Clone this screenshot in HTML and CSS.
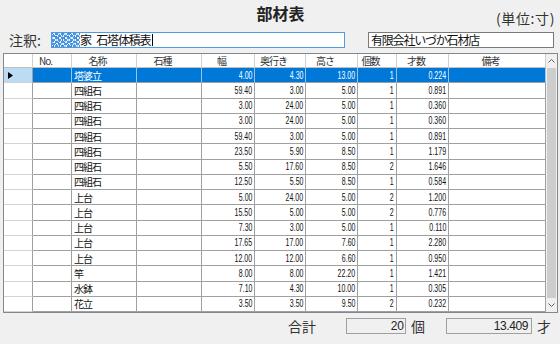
FILE: index.html
```html
<!DOCTYPE html>
<html lang="ja">
<head>
<meta charset="utf-8">
<title>部材表</title>
<link rel="stylesheet" href="styles.css">
</head>
<body>
<div class="page">
  <div class="titlebar">
    <div class="title">部材表</div>
    <div class="unit">(単位:寸)</div>
  </div>
  <div class="noterow">
    <div class="label">注釈:</div>
    <div class="field field-focus"><span class="redact"></span><span class="ftext">家 石塔体積表</span><span class="caret"></span></div>
    <div class="field field-company"><span class="ftext">有限会社いづか石材店</span></div>
  </div>
  <div class="grid">
    <div class="table">
      <div class="row head">
        <div class="c rh"></div><div class="c">No.</div><div class="c">名称</div><div class="c">石種</div><div class="c">幅</div><div class="c">奥行き</div><div class="c">高さ</div><div class="c">個数</div><div class="c">才数</div><div class="c">備考</div>
      </div>
      <div class="row sel">
        <div class="c rh"><svg width="5" height="7" viewBox="0 0 5 7"><polygon points="0,0 5,3.5 0,7" fill="#000"/></svg></div><div class="c"></div><div class="c t">塔婆立</div><div class="c"></div><div class="c n"><span>4.00</span></div><div class="c n"><span>4.30</span></div><div class="c n"><span>13.00</span></div><div class="c n"><span>1</span></div><div class="c n"><span>0.224</span></div><div class="c"></div>
      </div>
      <div class="row"><div class="c rh"></div><div class="c"></div><div class="c t">四組石</div><div class="c"></div><div class="c n"><span>59.40</span></div><div class="c n"><span>3.00</span></div><div class="c n"><span>5.00</span></div><div class="c n"><span>1</span></div><div class="c n"><span>0.891</span></div><div class="c"></div></div>
      <div class="row"><div class="c rh"></div><div class="c"></div><div class="c t">四組石</div><div class="c"></div><div class="c n"><span>3.00</span></div><div class="c n"><span>24.00</span></div><div class="c n"><span>5.00</span></div><div class="c n"><span>1</span></div><div class="c n"><span>0.360</span></div><div class="c"></div></div>
      <div class="row"><div class="c rh"></div><div class="c"></div><div class="c t">四組石</div><div class="c"></div><div class="c n"><span>3.00</span></div><div class="c n"><span>24.00</span></div><div class="c n"><span>5.00</span></div><div class="c n"><span>1</span></div><div class="c n"><span>0.360</span></div><div class="c"></div></div>
      <div class="row"><div class="c rh"></div><div class="c"></div><div class="c t">四組石</div><div class="c"></div><div class="c n"><span>59.40</span></div><div class="c n"><span>3.00</span></div><div class="c n"><span>5.00</span></div><div class="c n"><span>1</span></div><div class="c n"><span>0.891</span></div><div class="c"></div></div>
      <div class="row"><div class="c rh"></div><div class="c"></div><div class="c t">四組石</div><div class="c"></div><div class="c n"><span>23.50</span></div><div class="c n"><span>5.90</span></div><div class="c n"><span>8.50</span></div><div class="c n"><span>1</span></div><div class="c n"><span>1.179</span></div><div class="c"></div></div>
      <div class="row"><div class="c rh"></div><div class="c"></div><div class="c t">四組石</div><div class="c"></div><div class="c n"><span>5.50</span></div><div class="c n"><span>17.60</span></div><div class="c n"><span>8.50</span></div><div class="c n"><span>2</span></div><div class="c n"><span>1.646</span></div><div class="c"></div></div>
      <div class="row"><div class="c rh"></div><div class="c"></div><div class="c t">四組石</div><div class="c"></div><div class="c n"><span>12.50</span></div><div class="c n"><span>5.50</span></div><div class="c n"><span>8.50</span></div><div class="c n"><span>1</span></div><div class="c n"><span>0.584</span></div><div class="c"></div></div>
      <div class="row"><div class="c rh"></div><div class="c"></div><div class="c t">上台</div><div class="c"></div><div class="c n"><span>5.00</span></div><div class="c n"><span>24.00</span></div><div class="c n"><span>5.00</span></div><div class="c n"><span>2</span></div><div class="c n"><span>1.200</span></div><div class="c"></div></div>
      <div class="row"><div class="c rh"></div><div class="c"></div><div class="c t">上台</div><div class="c"></div><div class="c n"><span>15.50</span></div><div class="c n"><span>5.00</span></div><div class="c n"><span>5.00</span></div><div class="c n"><span>2</span></div><div class="c n"><span>0.776</span></div><div class="c"></div></div>
      <div class="row"><div class="c rh"></div><div class="c"></div><div class="c t">上台</div><div class="c"></div><div class="c n"><span>7.30</span></div><div class="c n"><span>3.00</span></div><div class="c n"><span>5.00</span></div><div class="c n"><span>1</span></div><div class="c n"><span>0.110</span></div><div class="c"></div></div>
      <div class="row"><div class="c rh"></div><div class="c"></div><div class="c t">上台</div><div class="c"></div><div class="c n"><span>17.65</span></div><div class="c n"><span>17.00</span></div><div class="c n"><span>7.60</span></div><div class="c n"><span>1</span></div><div class="c n"><span>2.280</span></div><div class="c"></div></div>
      <div class="row"><div class="c rh"></div><div class="c"></div><div class="c t">上台</div><div class="c"></div><div class="c n"><span>12.00</span></div><div class="c n"><span>12.00</span></div><div class="c n"><span>6.60</span></div><div class="c n"><span>1</span></div><div class="c n"><span>0.950</span></div><div class="c"></div></div>
      <div class="row"><div class="c rh"></div><div class="c"></div><div class="c t">竿</div><div class="c"></div><div class="c n"><span>8.00</span></div><div class="c n"><span>8.00</span></div><div class="c n"><span>22.20</span></div><div class="c n"><span>1</span></div><div class="c n"><span>1.421</span></div><div class="c"></div></div>
      <div class="row"><div class="c rh"></div><div class="c"></div><div class="c t">水鉢</div><div class="c"></div><div class="c n"><span>7.10</span></div><div class="c n"><span>4.30</span></div><div class="c n"><span>10.00</span></div><div class="c n"><span>1</span></div><div class="c n"><span>0.305</span></div><div class="c"></div></div>
      <div class="row"><div class="c rh"></div><div class="c"></div><div class="c t">花立</div><div class="c"></div><div class="c n"><span>3.50</span></div><div class="c n"><span>3.50</span></div><div class="c n"><span>9.50</span></div><div class="c n"><span>2</span></div><div class="c n"><span>0.232</span></div><div class="c"></div></div>
    </div>
    <div class="vscroll">
      <div class="arrow"><svg width="7" height="4" viewBox="0 0 7 4"><polyline points="0.5,3.5 3.5,0.5 6.5,3.5" fill="none" stroke="#606060" stroke-width="1"/></svg></div>
      <div class="thumb"></div>
      <div class="arrow"><svg width="7" height="4" viewBox="0 0 7 4"><polyline points="0.5,0.5 3.5,3.5 6.5,0.5" fill="none" stroke="#606060" stroke-width="1"/></svg></div>
    </div>
  </div>
  <div class="footer">
    <div class="flabel">合計</div>
    <div class="box box-count">20</div>
    <div class="funit unit-ko">個</div>
    <div class="box box-total">13.409</div>
    <div class="funit unit-sun">才</div>
  </div>
</div>
</body>
</html>
```
FILE: styles.css
```css
html, body {
  margin: 0;
  padding: 0;
}
body {
  width: 560px;
  height: 344px;
  overflow: hidden;
  background: #f0f0f0;
  color: #1e1e1e;
  font-family: "Noto Sans CJK JP", "Noto Sans", sans-serif;
}
.page {
  padding: 0 2px 0 3px;
}
.titlebar {
  display: grid;
  grid-template-columns: 1fr auto 1fr;
  height: 32px;
}
.title {
  grid-column: 2;
  font-size: 16px;
  font-weight: bold;
  line-height: 27px;
  color: #222;
}
.unit {
  justify-self: end;
  margin-right: 3px;
  font-size: 14px;
  letter-spacing: 0.6px;
  line-height: 37px;
  color: #333;
}
.noterow {
  display: flex;
  align-items: center;
  height: 16px;
  margin-bottom: 5px;
}
.label {
  box-sizing: border-box;
  width: 48px;
  padding-left: 6px;
  font-size: 14px;
  line-height: 16px;
  color: #333;
}
.field {
  box-sizing: border-box;
  height: 16px;
  background: #fff;
  display: flex;
  align-items: center;
  font-size: 12px;
  letter-spacing: -1.2px;
  line-height: 14px;
  color: #111;
  overflow: hidden;
  white-space: pre;
}
.field-focus {
  width: 294px;
  border: 1px solid #4d9be0;
}
.field-company {
  width: 186px;
  margin-left: 23px;
  border: 1px solid #7a7a7a;
  padding-left: 2px;
}
.redact {
  width: 28px;
  height: 14px;
  flex: none;
  background-color: #a9cdf0;
  background-image:
    repeating-conic-gradient(#4b95e0 0 25%, transparent 0 50%),
    repeating-conic-gradient(#eaf3fc 0 25%, transparent 0 50%),
    repeating-conic-gradient(#2f86dc 0 25%, transparent 0 50%);
  background-size: 6px 4px, 3px 5px, 10px 6px;
  background-position: 0 0, 1px 1px, 2px 0;
}
.ftext {
  word-spacing: 4px;
}
.caret {
  width: 1px;
  height: 12px;
  background: #000;
  margin-left: 2px;
}
.grid {
  display: flex;
  width: 555px;
  box-sizing: border-box;
  border: 1px solid #828790;
  background: #fff;
}
.table {
  width: 542px;
  flex: none;
}
.row {
  display: grid;
  grid-template-columns: 29px 39px 65px 65px 53px 51px 52px 39px 52px 97px;
  height: 15.25px;
}
.c {
  box-sizing: border-box;
  border-right: 1px solid #a0a0a0;
  border-bottom: 1px solid #a0a0a0;
  display: flex;
  align-items: center;
  font-size: 10px;
  letter-spacing: -1px;
  color: #111;
  overflow: hidden;
  white-space: nowrap;
}
.c.rh {
  border-bottom-color: #d4d4d4;
  border-right-color: #a0a0a0;
  padding-left: 4px;
}
.c.t {
  padding-left: 2px;
}
.c.n {
  justify-content: flex-end;
  padding-right: 2px;
  font-family: "Liberation Sans", sans-serif;
  letter-spacing: 0;
}
.c.n span {
  display: inline-block;
  transform: scaleX(0.7);
  transform-origin: 100% 50%;
}
.row.head {
  height: 14px;
}
.row.head .c {
  justify-content: center;
  padding-right: 13px;
  border-right-color: #d0d0d0;
  border-bottom-color: #c0c0c0;
  color: #333;
}
.row.head .c.rh {
  padding: 0;
}
.row.sel .c {
  background: #0078d7;
  color: #fff;
  border-right-color: #9cc3ea;
}
.row.sel .c.rh {
  background: #bcdcf4;
  border-right-color: #a0a0a0;
}
.vscroll {
  flex: 1;
  display: flex;
  flex-direction: column;
  background: #f0f0f0;
}
.arrow {
  height: 14px;
  display: flex;
  align-items: center;
  justify-content: center;
  flex: none;
}
.thumb {
  flex: 1;
  margin: 0 1px;
  background: #cdcdcd;
}
.footer {
  display: flex;
  align-items: center;
  height: 16px;
  margin-top: 5px;
  padding-left: 285px;
}
.flabel {
  font-size: 14px;
  line-height: 16px;
  color: #333;
}
.box {
  box-sizing: border-box;
  height: 16px;
  border: 1px solid #a0a0a0;
  background: #f0f0f0;
  text-align: right;
  font-family: "Liberation Sans", sans-serif;
  font-size: 12px;
  line-height: 14px;
  color: #222;
}
.box-count {
  width: 60px;
  margin-left: 30px;
  padding-right: 1px;
}
.box-total {
  width: 86px;
  margin-left: 21px;
  padding-right: 3px;
  letter-spacing: -0.4px;
}
.funit {
  font-size: 14px;
  line-height: 16px;
  color: #333;
}
.unit-ko {
  margin-left: 5px;
}
.unit-sun {
  margin-left: 5px;
}
```
